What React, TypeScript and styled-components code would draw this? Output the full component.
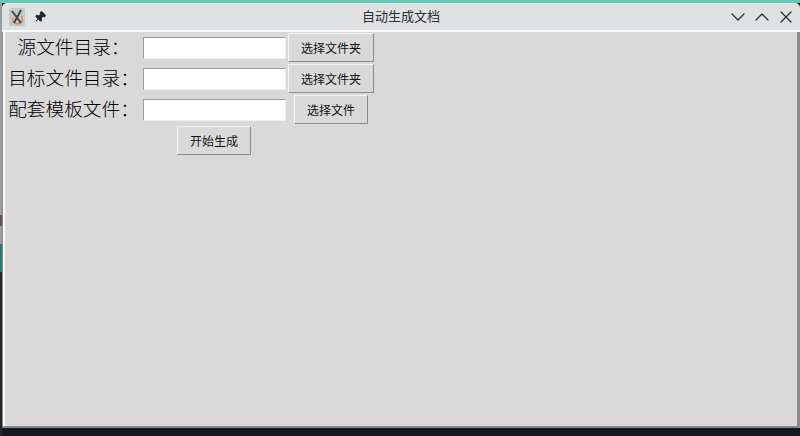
import React from 'react';
import styled, { createGlobalStyle } from 'styled-components';
import { ChevronDown, ChevronUp, X, Pin } from 'lucide-react';

const GlobalStyle = createGlobalStyle`
  html, body {
    margin: 0;
    padding: 0;
    width: 800px;
    height: 436px;
    overflow: hidden;
  }
`;

const Desktop = styled.div`
  width: 800px;
  height: 436px;
  box-sizing: border-box;
  padding: 3px 0 8px 2px;
  background:
    linear-gradient(#62c8b4 0 3px, transparent 3px),
    linear-gradient(
        #9a9c9e 0 215px,
        #6a4a60 215px 226px,
        #9a9c9e 226px 244px,
        #1f7c78 244px 272px,
        #23262b 272px
      )
      left top / 2px 100% no-repeat,
    #14181f;
`;

const Window = styled.div`
  height: 100%;
  display: flex;
  flex-direction: column;
  border-radius: 5px 5px 0 0;
  overflow: hidden;
  background: #8a8a8a;
`;

const TitleBar = styled.div`
  flex: none;
  height: 27px;
  display: grid;
  grid-template-columns: 1fr auto 1fr;
  align-items: center;
  padding: 0 2px;
  background: #e0e1e3;
  border-bottom: 2px solid #fcfcfc;
`;

const TitleLeft = styled.div`
  display: flex;
  align-items: center;
  gap: 9px;
  padding-left: 5px;
`;

const TitleRight = styled.div`
  display: flex;
  align-items: center;
  justify-content: flex-end;
`;

const AppIcon = styled.div`
  width: 16px;
  height: 18px;
  border-radius: 2px;
  background: #c4c6c8;
  display: flex;
`;

const PinIcon = styled(Pin)`
  transform: rotate(45deg);
  fill: #232629;
  color: #232629;
`;

const WindowButton = styled.span`
  width: 24px;
  height: 24px;
  display: flex;
  align-items: center;
  justify-content: center;
  color: #2a2d30;
`;

const Title = styled.div`
  font-family: 'Noto Sans CJK SC', sans-serif;
  font-size: 13px;
  line-height: 18px;
  margin-bottom: 2px;
  color: #2c2f33;
`;

const Body = styled.div`
  flex: 1;
  min-height: 0;
  margin: 0 3px 2px 1px;
  background: #d9d9d9;
  border-left: 2px solid #fcfcfc;
`;

const Form = styled.div`
  display: grid;
  width: 370px;
  grid-template-columns: 137px 145px auto;
  grid-auto-rows: 31px;
  align-items: center;
  justify-items: center;
`;

const Label = styled.label`
  font-family: 'Liberation Serif', 'Noto Sans CJK SC', serif;
  font-weight: 300;
  font-size: 18.67px;
  line-height: 24px;
  color: #000;
  white-space: nowrap;
`;

const Entry = styled.input`
  box-sizing: border-box;
  width: 143px;
  height: 22px;
  margin: 0;
  background: #fff;
  border: 1px solid;
  border-color: #9c9c9c #eeeeee #eeeeee #9c9c9c;
  outline: none;
`;

const Button = styled.button<{ $wide?: boolean }>`
  box-sizing: border-box;
  width: ${(props) => (props.$wide ? '86px' : '74px')};
  height: 29px;
  padding: 0;
  font-family: 'Noto Sans CJK SC', sans-serif;
  font-size: 12px;
  color: #111;
  background: #d9d9d9;
  border: 1px solid;
  border-color: #f4f4f4 #8c8c8c #8c8c8c #f4f4f4;
`;

const StartCell = styled.div`
  grid-column: 2;
  padding-right: 1px;
`;

function AppLogo(): JSX.Element {
  return (
    <AppIcon>
      <svg width="16" height="18" viewBox="0 0 16 18" fill="none">
        <path d="M4 10c-2 4 3 7 7 5 3-2 3-5 1-7" stroke="#d98a3c" strokeWidth="1.4" />
        <path d="M3 3l9 12M12 2L5 15" stroke="#3a3d42" strokeWidth="1.8" />
      </svg>
    </AppIcon>
  );
}

const rows = [
  { label: '源文件目录：', button: '选择文件夹', wide: true },
  { label: '目标文件目录：', button: '选择文件夹', wide: true },
  { label: '配套模板文件：', button: '选择文件', wide: false },
];

function App(): JSX.Element {
  return (
    <>
      <GlobalStyle />
      <Desktop>
        <Window>
          <TitleBar>
            <TitleLeft>
              <AppLogo />
              <PinIcon size={12} />
            </TitleLeft>
            <Title>自动生成文档</Title>
            <TitleRight>
              <WindowButton>
                <ChevronDown size={24} strokeWidth={1.3} />
              </WindowButton>
              <WindowButton>
                <ChevronUp size={24} strokeWidth={1.3} />
              </WindowButton>
              <WindowButton>
                <X size={20} strokeWidth={1.5} />
              </WindowButton>
            </TitleRight>
          </TitleBar>
          <Body>
            <Form>
              {rows.map((row) => (
                <React.Fragment key={row.label}>
                  <Label>{row.label}</Label>
                  <Entry />
                  <Button $wide={row.wide}>{row.button}</Button>
                </React.Fragment>
              ))}
              <StartCell>
                <Button>开始生成</Button>
              </StartCell>
            </Form>
          </Body>
        </Window>
      </Desktop>
    </>
  );
}

export default App;
